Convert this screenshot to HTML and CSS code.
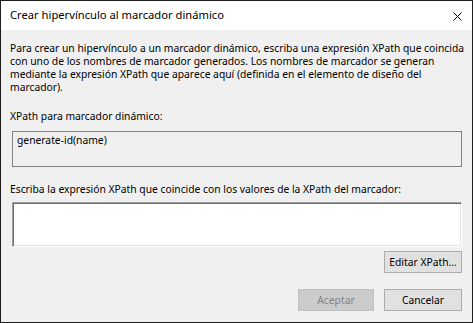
FILE: index.html
```html
<!DOCTYPE html>
<html lang="es">
<head>
<meta charset="utf-8">
<title>Crear hipervínculo al marcador dinámico</title>
<link rel="stylesheet" href="styles.css">
</head>
<body>
<div class="window">
  <div class="titlebar">
    <span class="title">Crear hipervínculo al marcador dinámico</span>
    <span class="close"><svg width="9" height="9" viewBox="0 0 9 9"><path d="M0.5 0.5 L8.5 8.5 M8.5 0.5 L0.5 8.5" stroke="#000" stroke-width="1" fill="none"/></svg></span>
  </div>
  <div class="content">
    <p class="intro">
      <span class="ln">Para crear un hipervínculo a un marcador dinámico, escriba una expresión XPath que coincida</span>
      <span class="ln">con uno de los nombres de marcador generados. Los nombres de marcador se generan</span>
      <span class="ln">mediante la expresión XPath que aparece aquí (definida en el elemento de diseño del</span>
      <span class="ln">marcador).</span>
    </p>
    <div class="label label-first">XPath para marcador dinámico:</div>
    <div class="readonly">generate-id(name)</div>
    <div class="label label-second">Escriba la expresión XPath que coincide con los valores de la XPath del marcador:</div>
    <div class="input"></div>
    <div class="row row-edit">
      <button class="btn">Editar XPath…</button>
    </div>
    <div class="row row-actions">
      <button class="btn btn-disabled">Aceptar</button>
      <button class="btn">Cancelar</button>
    </div>
  </div>
</div>
</body>
</html>
```
FILE: styles.css
```css
* { box-sizing: border-box; }
html, body { margin: 0; padding: 0; }
body {
  width: 473px;
  height: 323px;
  font-family: "Noto Sans", "Open Sans", sans-serif;
  font-size: 10.3px;
  color: #000;
  background: #f0f0f0;
}
.window {
  width: 473px;
  height: 323px;
  border: 1px solid #1e1e1e;
  background: #f0f0f0;
  display: flex;
  flex-direction: column;
}
.titlebar {
  height: 29px;
  background: #fff;
  display: flex;
  align-items: center;
  justify-content: space-between;
  padding: 0 10px 0 9px;
  flex: none;
}
.title {
  font-size: 11.2px;
  line-height: 16px;
  padding-bottom: 1px;
}
.close { display: flex; width: 9px; height: 9px; margin-top: 2px; }
.content {
  display: flex;
  flex-direction: column;
  padding: 0 10px 0 11px;
  flex: 1;
}
.intro {
  margin: 12px 0 0 -2px;
  line-height: 13px;
}
.ln { display: block; white-space: nowrap; }
.label { line-height: 13px; margin-left: -2px; white-space: nowrap; }
.label-first { margin-top: 16px; }
.label-second { margin-top: 16px; }
.readonly {
  margin-top: 8px;
  height: 36px;
  border: 1px solid #828282;
  padding: 2px 4px;
  line-height: 13px;
}
.input {
  margin-top: 6px;
  height: 45px;
  background: #fff;
  border-top: 1px solid #a0a0a0;
  border-left: 1px solid #a0a0a0;
  border-right: 1px solid #fff;
  border-bottom: 1px solid #fff;
  box-shadow: inset 1px 1px 0 #6d6d6d, inset -1px -1px 0 #e3e3e3;
}
.row { display: flex; justify-content: flex-end; gap: 10px; }
.row-edit { margin-top: 4px; }
.row-actions { margin-top: 16px; }
.btn {
  font-family: inherit;
  font-size: 10.3px;
  width: 78px;
  height: 22px;
  padding: 0;
  background: #e1e1e1;
  border: 1px solid #adadad;
  color: #000;
  line-height: 18px;
}
.btn-disabled {
  width: 76px;
  background: #cccccc;
  border-color: #bfbfbf;
  color: #838383;
}
```
